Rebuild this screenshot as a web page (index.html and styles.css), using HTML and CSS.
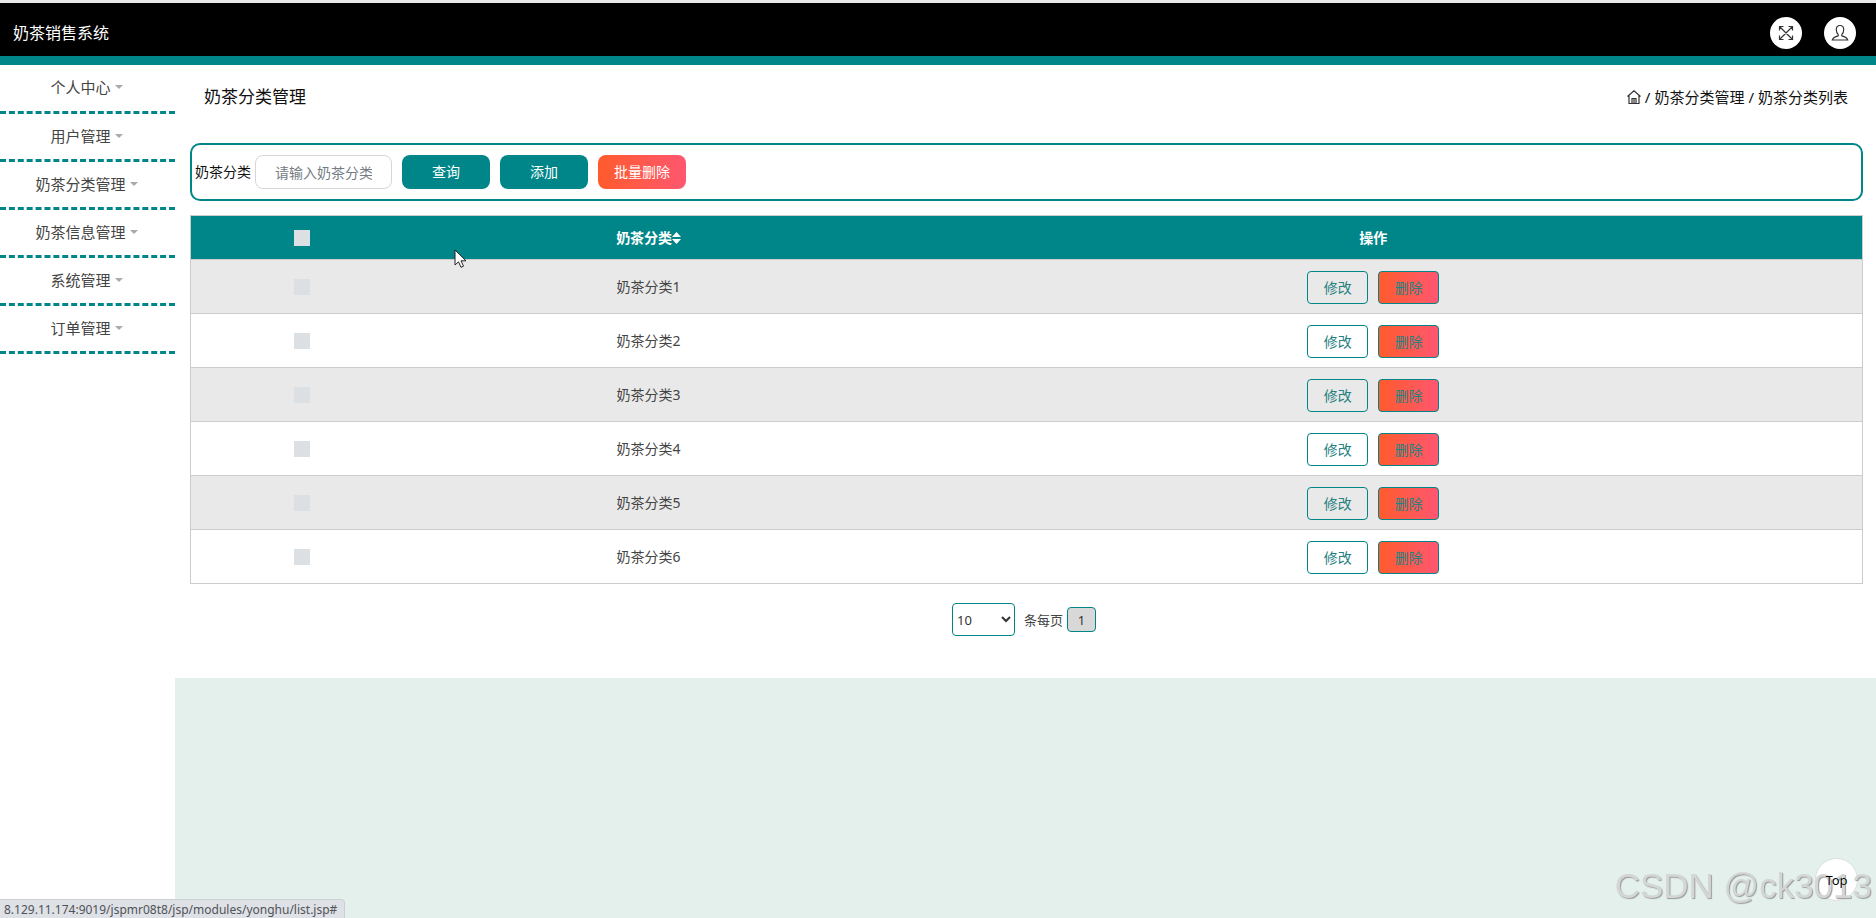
FILE: index.html
```html
<!DOCTYPE html>
<html lang="zh-CN">
<head>
<meta charset="utf-8">
<title>奶茶销售系统</title>
<link rel="stylesheet" href="styles.css">
</head>
<body>
<header class="topbar">
  <h1 class="brand">奶茶销售系统</h1>
  <div class="tools">
    <button class="tool" type="button" aria-label="全屏">
      <svg width="18" height="18" viewBox="0 0 18 18"><path d="M2.500 2.500l13 13M15.500 2.500l-13 13M2.500 6.500v-4h4M11.500 2.500h4v4M15.500 11.500v4h-4M6.500 15.500h-4v-4"/></svg>
    </button>
    <button class="tool" type="button" aria-label="个人中心">
      <svg width="18" height="18" viewBox="0 0 18 18"><path d="M7.200 10.500C5.800 9.500 5.300 7.500 5.300 5.500C5.300 3 6.500 1.500 9 1.500s3.700 1.500 3.700 4c0 2-.5 4-1.900 5v1.300c2.500.6 5.200 1.600 5.900 4.200H1.300c.7-2.600 3.400-3.600 5.900-4.200z"/></svg>
    </button>
  </div>
</header>
<div class="layout">
  <nav class="sidebar">
    <a class="menu" href="#">个人中心<span class="caret"></span></a>
    <a class="menu" href="#">用户管理<span class="caret"></span></a>
    <a class="menu" href="#">奶茶分类管理<span class="caret"></span></a>
    <a class="menu" href="#">奶茶信息管理<span class="caret"></span></a>
    <a class="menu" href="#">系统管理<span class="caret"></span></a>
    <a class="menu" href="#">订单管理<span class="caret"></span></a>
  </nav>
  <main class="content">
    <section class="panel">
      <div class="heading">
        <h2 class="title">奶茶分类管理</h2>
        <div class="crumbs">
          <a href="#" aria-label="首页"><svg width="14" height="14" viewBox="0 0 14 14"><path d="M.5 6.500L7 .8l6.500 5.700M2 5.500v8h10v-8M5 13.500v-5h4v5M7 8.500v5"/></svg></a>
          <span>/</span><span>奶茶分类管理</span><span>/</span><span>奶茶分类列表</span>
        </div>
      </div>
      <form class="search">
        <label for="kind">奶茶分类</label>
        <input class="field" id="kind" type="text" placeholder="请输入奶茶分类">
        <button class="btn" type="button">查询</button>
        <button class="btn" type="button">添加</button>
        <button class="btn danger" type="button">批量删除</button>
      </form>
      <table class="grid">
        <thead>
          <tr>
            <th class="col-check"><input class="tick" type="checkbox" aria-label="全选"></th>
            <th class="col-name"><span class="sortable">奶茶分类<svg width="9" height="12" viewBox="0 0 9 12"><path d="M0 5L4.500 0L9 5zM0 7h9L4.500 12z"/></svg></span></th>
            <th>操作</th>
          </tr>
        </thead>
        <tbody>
          <tr><td><input class="tick" type="checkbox" aria-label="选择奶茶分类1"></td><td>奶茶分类1</td><td><div class="actions"><button class="act" type="button">修改</button><button class="act remove" type="button">删除</button></div></td></tr>
          <tr><td><input class="tick" type="checkbox" aria-label="选择奶茶分类2"></td><td>奶茶分类2</td><td><div class="actions"><button class="act" type="button">修改</button><button class="act remove" type="button">删除</button></div></td></tr>
          <tr><td><input class="tick" type="checkbox" aria-label="选择奶茶分类3"></td><td>奶茶分类3</td><td><div class="actions"><button class="act" type="button">修改</button><button class="act remove" type="button">删除</button></div></td></tr>
          <tr><td><input class="tick" type="checkbox" aria-label="选择奶茶分类4"></td><td>奶茶分类4</td><td><div class="actions"><button class="act" type="button">修改</button><button class="act remove" type="button">删除</button></div></td></tr>
          <tr><td><input class="tick" type="checkbox" aria-label="选择奶茶分类5"></td><td>奶茶分类5</td><td><div class="actions"><button class="act" type="button">修改</button><button class="act remove" type="button">删除</button></div></td></tr>
          <tr><td><input class="tick" type="checkbox" aria-label="选择奶茶分类6"></td><td>奶茶分类6</td><td><div class="actions"><button class="act" type="button">修改</button><button class="act remove" type="button">删除</button></div></td></tr>
        </tbody>
      </table>
      <div class="pager">
        <select class="size" id="size"><option>10</option><option>25</option><option>50</option></select>
        <label for="size">条每页</label>
        <button class="page" type="button">1</button>
      </div>
    </section>
  </main>
</div>
<button class="to-top" type="button">Top</button>
<div class="watermark">CSDN @ck3013</div>
<div class="status">8.129.11.174:9019/jspmr08t8/jsp/modules/yonghu/list.jsp#</div>
<svg class="pointer" width="13" height="20" viewBox="0 0 13 20"><path d="M1 1v15l3.500-3.200L7 18.300l2.500-1.100L7 11.800h5z"/></svg>
</body>
</html>
```
FILE: styles.css
```css
* {
  box-sizing: border-box;
}

body {
  margin: 0;
  min-height: 100vh;
  display: flex;
  flex-direction: column;
  background: #fff;
  color: #444;
  font: 14px/20px "Noto Sans", "Noto Sans CJK SC", sans-serif;
}

button,
input,
select {
  font: inherit;
}

button {
  cursor: pointer;
}

.topbar {
  display: flex;
  align-items: center;
  justify-content: space-between;
  height: 65px;
  padding: 7px 20px 0 13px;
  border-top: 3px solid #e9e9ec;
  border-bottom: 9px solid #008689;
  background: #000;
}

.brand {
  margin: 0;
  color: #fff;
  font-size: 16px;
  font-weight: 400;
}

.tools {
  display: flex;
  gap: 22px;
}

.tool {
  display: flex;
  align-items: center;
  justify-content: center;
  width: 32px;
  height: 32px;
  padding: 0;
  border: 0;
  border-radius: 50%;
  background: #fff;
}

.tool path,
.crumbs path {
  fill: none;
  stroke: #333;
  stroke-width: 1.2;
}

.layout {
  flex: 1;
  display: flex;
}

.sidebar {
  flex: none;
  width: 175px;
}

.menu {
  display: flex;
  align-items: center;
  justify-content: center;
  gap: 4px;
  height: 48px;
  padding: 0 2px 2px 0;
  border-bottom: 3px dashed #008689;
  color: #444;
  font-size: 15px;
  text-decoration: none;
}

.menu:first-child {
  height: 49px;
}

.caret {
  border: 4px solid transparent;
  border-top-color: #aaa;
  border-bottom: 0;
}

.content {
  flex: 1;
  background: #e3f0eb;
}

.panel {
  padding: 16px 13px 42px 15px;
  background: #fff;
}

.heading {
  display: flex;
  align-items: center;
  justify-content: space-between;
  height: 32px;
  margin-bottom: 30px;
  padding: 0 15px 0 14px;
  color: #111;
}

.title {
  margin: 0;
  font-size: 17px;
  font-weight: 400;
}

.crumbs {
  display: flex;
  align-items: center;
  gap: 4px;
  font-size: 15px;
}

.crumbs svg {
  display: block;
}

.search {
  display: flex;
  align-items: center;
  gap: 10px;
  height: 58px;
  margin-bottom: 14px;
  padding: 0 3px;
  border: 2px solid #008689;
  border-radius: 10px;
  color: #111;
}

.search label {
  margin-right: -6px;
}

.field {
  width: 137px;
  height: 34px;
  padding: 0 19px;
  border: 1px solid #d6d6d6;
  border-radius: 8px;
  outline: 0;
}

.field::placeholder {
  color: #757c84;
}

.btn {
  width: 88px;
  height: 34px;
  padding: 0;
  border: 0;
  border-radius: 8px;
  background: #008689;
  color: #fff;
}

.danger,
.act.remove {
  background: linear-gradient(90deg, #ff5b2c, #ff5770);
}

.grid {
  width: 100%;
  table-layout: fixed;
  border: 1px solid #ccc;
  border-collapse: collapse;
  text-align: center;
}

.grid tr {
  height: 54px;
  border-bottom: 1px solid #ccc;
}

.grid thead tr {
  height: 44px;
  background: #008689;
  color: #fff;
}

.grid tbody tr:nth-child(odd) {
  background: #e9e9e9;
}

.grid th,
.grid td {
  padding: 0;
}

.col-check {
  width: 13.3%;
}

.col-name {
  width: 28.2%;
}

.sortable {
  display: inline-flex;
  align-items: center;
}

.sortable path {
  fill: #fff;
}

.tick {
  appearance: none;
  display: block;
  width: 16px;
  height: 16px;
  margin: 0 auto;
  background: #dcdfe4;
}

.actions {
  display: flex;
  justify-content: center;
  gap: 10px;
  padding-top: 2px;
}

.act {
  width: 61px;
  height: 33px;
  padding: 0;
  border: 1px solid #008689;
  border-radius: 4px;
  background: transparent;
  color: #26817f;
}

.pager {
  display: flex;
  align-items: center;
  justify-content: center;
  margin-top: 19px;
  padding-right: 5px;
  font-size: 13px;
}

.size {
  width: 63px;
  height: 33px;
  margin-right: 9px;
  border: 1px solid #008689;
  border-radius: 4px;
  background: #fff;
  color: #333;
}

.page {
  width: 29px;
  height: 25px;
  margin-left: 4px;
  padding: 0;
  border: 1px solid #008689;
  border-radius: 4px;
  background: #d8d8d8;
  color: #333;
}

.to-top {
  position: fixed;
  right: 18px;
  bottom: 17px;
  width: 43px;
  height: 43px;
  padding: 0;
  border: 1px solid #ddd;
  border-radius: 50%;
  background: #fff;
  color: #000;
  font-size: 13px;
}

.watermark {
  position: fixed;
  right: 4px;
  bottom: 12px;
  color: #d3d6d5;
  font: 35px/40px "Liberation Sans", sans-serif;
  text-shadow: 1px 1px 1px #999;
  mix-blend-mode: darken;
  pointer-events: none;
}

.status {
  position: fixed;
  left: 0;
  bottom: 0;
  height: 19px;
  padding: 0 7px 0 4px;
  border-top: 1px solid #ccd0d3;
  border-right: 1px solid #ccd0d3;
  border-top-right-radius: 4px;
  background: #dee1e6;
  color: #505357;
  font-size: 12px;
}

.pointer {
  position: fixed;
  left: 454px;
  top: 249px;
  fill: #fff;
  stroke: #222;
  pointer-events: none;
}
```
